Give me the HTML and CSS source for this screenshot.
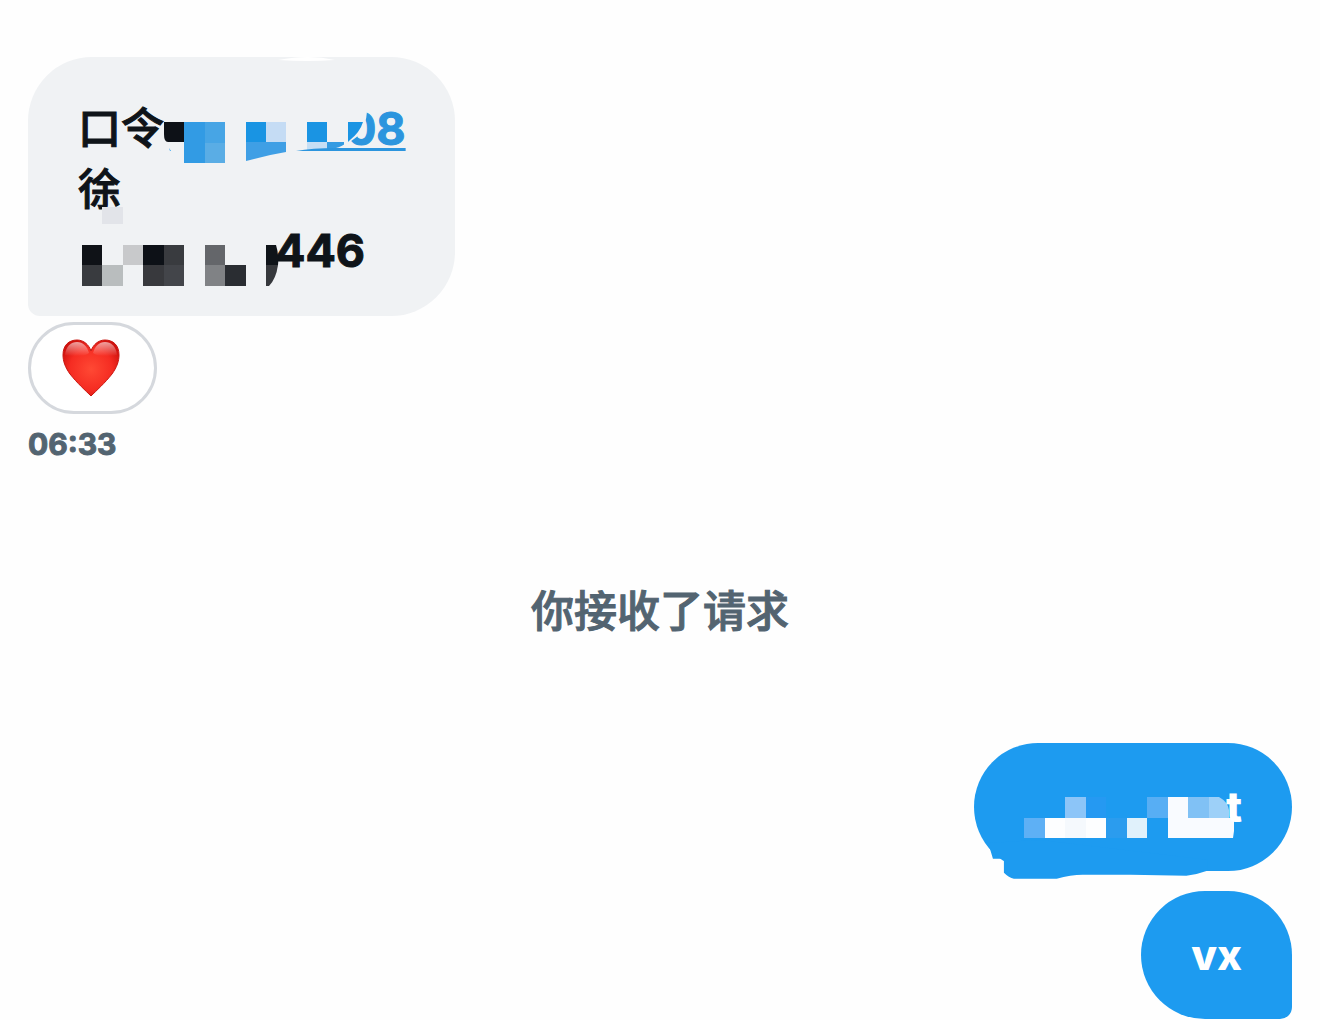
FILE: index.html
```html
<!DOCTYPE html>
<html lang="zh-CN">
<head>
    <meta charset="UTF-8">
    <meta name="viewport" content="width=device-width, initial-scale=1.0">
    <title>Messages</title>
    <link rel="stylesheet" href="styles.css">
</head>
<body>
    <main class="chat">
        <section class="received">
            <div class="bubble bubble-in">
                <svg class="glint" viewBox="0 0 60 6" aria-hidden="true"><path d="M0 3Q16 0 30 0T57 3Q30 5 0 3Z" fill="#fff"/></svg>
                <div class="line">
                    <span class="han">口令</span>
                    <svg class="mosaic mosaic-link" viewBox="164 98 182 61" aria-hidden="true">
                        <path d="M164 122H184V142H168Q164 142 164 134Z" fill="#0d1117"/>
                        <path d="M169 148l2 3h-1z" fill="#1d9bf0"/>
                        <path d="M184 122h21v41h-21z" fill="#329be4"/>
                        <path d="M205 122h20v21h-20z" fill="#47a5e5"/>
                        <path d="M205 143h20v20h-20z" fill="#5aade5"/>
                        <path d="M246 122h20v20h-20z" fill="#1994e3"/>
                        <path d="M266 122h20v21h-20z" fill="#c5dcf4"/>
                        <path d="M246 142H286V152Q268 155 246 161Z" fill="#3f9fe5"/>
                        <path d="M307 122h20v20h-20z" fill="#1a94e3"/>
                        <path d="M307 142h20v8h-20z" fill="#c5def4"/>
                        <path d="M327 142H348Q341 147 336 148L330 150H327Z" fill="#349be2"/>
                        <path d="M296 151Q312 148 336 148H346V151Z" fill="#2b95de"/>
                        <path d="M344 108H367Q367 130 354 139L344 146Z" fill="#f0f2f4"/>
                        <path d="M348 122H363Q360 132 350 140L348 142Z" fill="#1a94e3"/>
                    </svg>
                    <a class="code" href="#">08</a>
                </div>
                <div class="line">
                    <span class="han">徐</span>
                    <svg class="mosaic mosaic-name" viewBox="121 159 20 61" aria-hidden="true">
                        <path d="M102 207h21v17h-21z" fill="#e2e4e9"/>
                    </svg>
                </div>
                <div class="line">
                    <svg class="mosaic mosaic-number" viewBox="78 220 197 61" aria-hidden="true">
                        <path d="M82 245h20v20h-20z" fill="#0f1217"/>
                        <path d="M82 265h20v21h-20z" fill="#393b3f"/>
                        <path d="M102 265h21v21h-21z" fill="#b9bdbe"/>
                        <path d="M123 245h20v20h-20z" fill="#c8c9cb"/>
                        <path d="M143 245h21v20h-21z" fill="#0d1117"/>
                        <path d="M143 265h21v21h-21z" fill="#38393d"/>
                        <path d="M164 245h20v20h-20z" fill="#393b3f"/>
                        <path d="M164 265h20v21h-20z" fill="#43454a"/>
                        <path d="M205 245h20v20h-20z" fill="#64666a"/>
                        <path d="M205 265h20v21h-20z" fill="#808285"/>
                        <path d="M225 265h21v21h-21z" fill="#2a2d32"/>
                        <path d="M266 245H276Q279 255 278 265H266Z" fill="#0f1419"/>
                        <path d="M266 265H278Q276 279 269 286H266Z" fill="#36383c"/>
                    </svg>
                    <span>446</span>
                </div>
            </div>
            <button class="reaction" type="button" aria-label="Love">
                <svg class="heart" viewBox="0 0 58 58">
                    <defs>
                        <radialGradient id="red" cx="50%" cy="52%" r="58%">
                            <stop offset="0" stop-color="#ff4934"/>
                            <stop offset=".65" stop-color="#f52c22"/>
                            <stop offset="1" stop-color="#d0120e"/>
                        </radialGradient>
                        <linearGradient id="shine" x1="0" y1="0" x2="0" y2="1">
                            <stop offset="0" stop-color="#fff" stop-opacity=".6"/>
                            <stop offset="1" stop-color="#fff" stop-opacity="0"/>
                        </linearGradient>
                    </defs>
                    <path d="M29 57C24 52 15 44 8 35C3 28 1 22 1 16C1 6 7 1 15 1C22 1 27 6 29 12C31 6 36 1 43 1C51 1 57 6 57 16C57 22 55 28 50 35C43 44 34 52 29 57Z" fill="url(#red)" stroke="#c9150f"/>
                    <path d="M3 16C4 7 9 3 15 3C21 3 25 7 27 14Q24 17 15 17T3 16Z" fill="url(#shine)"/>
                    <path d="M55 16C54 7 49 3 43 3C37 3 33 7 31 14Q34 17 43 17T55 16Z" fill="url(#shine)"/>
                </svg>
            </button>
            <time class="time" datetime="06:33">06:33</time>
        </section>

        <p class="notice">你接收了请求</p>

        <section class="sent">
            <div class="bubble bubble-out">
                <svg class="smear" viewBox="973 743 319 128" aria-hidden="true">
                    <path d="M985 843L989 849L992 859H1003V873Q1008 878 1013 879H1056Q1070 875 1082 875H1130L1186 876Q1196 875 1207 871V860L1040 840Z" fill="#1d9bf0"/>
                </svg>
                <div class="line">
                    <svg class="mosaic mosaic-reply" viewBox="1023 777 202 60" aria-hidden="true">
                        <path d="M1023 818h21v20h-21z" fill="#5eb0f5"/>
                        <path d="M1044 818h61v20h-61z" fill="#fdfeff"/>
                        <path d="M1064 818h21v20h-21z" fill="#f5f9fd"/>
                        <path d="M1064 797h21v21h-21z" fill="#8cc5f8"/>
                        <path d="M1085 797h20v21h-20z" fill="#2599f2"/>
                        <path d="M1105 818h21v20h-21z" fill="#2b9cee"/>
                        <path d="M1126 818h20v20h-20z" fill="#e0f1fb"/>
                        <path d="M1146 797h21v21h-21z" fill="#57aef4"/>
                        <path d="M1167 797H1187V818H1233V831L1232 838H1167Z" fill="#f9fbff"/>
                        <path d="M1187 797h21v21h-21z" fill="#80c1f5"/>
                        <path d="M1208 797H1218Q1227 802 1228 810V818H1208Z" fill="#9dd0f8"/>
                    </svg>
                    <span class="tail">t</span>
                </div>
            </div>
            <div class="bubble bubble-out last">
                <div class="line">vx</div>
            </div>
        </section>
    </main>
</body>
</html>
```
FILE: styles.css
```css
* {
    box-sizing: border-box;
}

body {
    margin: 0;
    background-color: #fefefe;
    color: #0f1419;
    font-family: Inter, "Noto Sans CJK SC", sans-serif;
}

.chat {
    display: flex;
    flex-direction: column;
    padding: 57px 28px 0;
}

.received {
    display: flex;
    flex-direction: column;
    align-items: flex-start;
}

.sent {
    display: flex;
    flex-direction: column;
    align-items: flex-end;
    gap: 20px;
}

.bubble {
    position: relative;
    border-radius: 64px;
}

.bubble-in {
    padding: 41px 49px 35px 50px;
    border-bottom-left-radius: 12px;
    background-color: #f0f2f4;
    font-size: 45px;
    font-weight: 700;
}

.bubble-out {
    padding: 34px 50px;
    background-color: #1d9bf0;
    color: #fff;
    font-size: 42px;
    font-weight: 800;
}

.last {
    border-bottom-right-radius: 12px;
}

.line {
    display: flex;
    height: 61px;
    line-height: 61px;
}

.bubble-out .line {
    height: 60px;
    line-height: 60px;
}

.han {
    font-size: 43px;
    font-weight: 500;
    -webkit-text-stroke: 1px currentColor;
}

/* blocks that hide part of a message */
.mosaic {
    position: relative;
    flex: none;
    height: 100%;
    overflow: visible;
}

.mosaic-link {
    width: 182px;
}

.mosaic-name {
    width: 20px;
}

.mosaic-number {
    width: 197px;
}

.mosaic-reply {
    width: 202px;
}

/* the letter runs in front of the blocks */
.tail {
    z-index: 1;
}

.code {
    color: #2b95de;
    text-decoration: underline;
    text-decoration-thickness: 3px;
    text-underline-offset: 3px;
    text-decoration-skip-ink: none;
}

.bubble-in span,
.code {
    -webkit-text-stroke: 1px currentColor;
}

.glint {
    position: absolute;
    top: 0;
    left: 250px;
    width: 60px;
}

.smear {
    position: absolute;
    inset: 0;
    width: 100%;
    height: 100%;
    overflow: visible;
}

.reaction {
    display: flex;
    align-items: center;
    justify-content: center;
    width: 129px;
    height: 92px;
    margin-top: 6px;
    padding: 0 4px 0 0;
    border: 3px solid #d5d8dd;
    border-radius: 46px;
    background-color: #fff;
    cursor: pointer;
}

.heart {
    width: 58px;
    height: 58px;
}

.time {
    margin-top: 10px;
    color: #536471;
    font-size: 30px;
    font-weight: 700;
    line-height: 40px;
    -webkit-text-stroke: 1px currentColor;
}

.notice {
    margin: 117px 0 101px;
    color: #536471;
    font-size: 43px;
    font-weight: 500;
    line-height: 61px;
    text-align: center;
    -webkit-text-stroke: 1px currentColor;
}
```
